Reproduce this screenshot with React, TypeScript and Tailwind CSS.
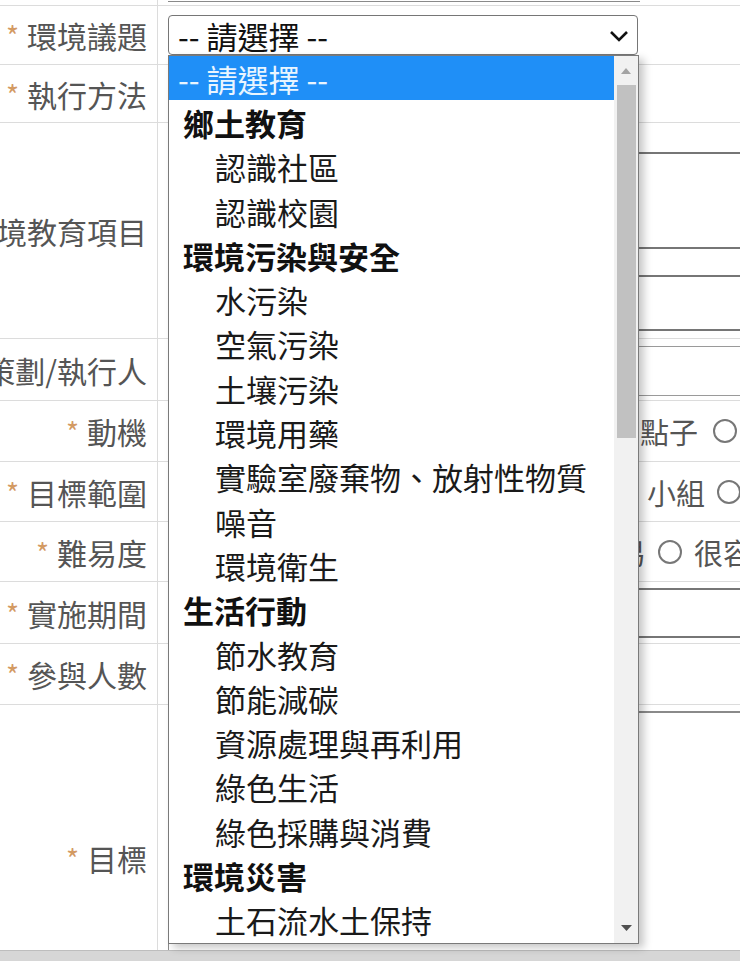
import React from "react";

const groups = [
  { label: "鄉土教育", items: ["認識社區", "認識校園"] },
  {
    label: "環境污染與安全",
    items: ["水污染", "空氣污染", "土壤污染", "環境用藥", "實驗室廢棄物、放射性物質", "噪音", "環境衛生"],
  },
  { label: "生活行動", items: ["節水教育", "節能減碳", "資源處理與再利用", "綠色生活", "綠色採購與消費"] },
  { label: "環境災害", items: ["土石流水土保持"] },
];

function Label({ text, star = true }: { text: string; star?: boolean }) {
  return (
    <div className="w-[158px] shrink-0 border-r border-[#dcdcdc] flex items-center justify-end pr-[10px] whitespace-nowrap text-[30px] leading-[30px] text-[#555]">
      {star && <span className="text-[#d39a63] text-[28px] mr-[8px]">*</span>}
      <span>{text}</span>
    </div>
  );
}

function Circle() {
  return <span className="inline-block w-[24px] h-[24px] rounded-full border-2 border-[#777] shrink-0" />;
}

function Dropdown() {
  return (
    <div className="absolute left-[-1px] top-[39px] w-[471px] h-[889px] bg-white border border-[#7a7a7a] shadow-[5px_4px_8px_rgba(0,0,0,0.22)] z-10 flex">
      <div className="flex-1 flex flex-col text-[31px] leading-[31px] text-[#1a1a1a]">
        <div className="h-[44.3px] bg-[#1f8ff7] text-[#e9f5ff] flex items-center pl-[9px] whitespace-nowrap">-- 請選擇 --</div>
        {groups.map((g) => (
          <React.Fragment key={g.label}>
            <div className="h-[44.3px] flex items-center pl-[14px] font-bold text-[#111] whitespace-nowrap">{g.label}</div>
            {g.items.map((it) => (
              <div key={it} className="h-[44.3px] flex items-center pl-[46px] whitespace-nowrap">
                {it}
              </div>
            ))}
          </React.Fragment>
        ))}
      </div>
      <div className="w-[24px] bg-[#f1f1f1] flex flex-col items-center">
        <div className="h-[29px] flex items-center justify-center">
          <svg width="10" height="6" viewBox="0 0 10 6">
            <polygon points="0,6 10,6 5,0" fill="#a3a3a3" />
          </svg>
        </div>
        <div className="w-[19px] h-[353px] bg-[#c1c1c1]" />
        <div className="flex-1" />
        <div className="h-[30px] flex items-center justify-center">
          <svg width="11" height="6" viewBox="0 0 11 6">
            <polygon points="0,0 11,0 5.5,6" fill="#505050" />
          </svg>
        </div>
      </div>
    </div>
  );
}

export default function App() {
  return (
    <div
      className="w-[740px] h-[961px] overflow-hidden bg-white flex flex-col"
      style={{ fontFamily: '"Noto Sans CJK TC", "Noto Sans", sans-serif' }}
    >
      {/* partial previous row */}
      <div className="h-[6px] flex border-b border-[#dcdcdc] shrink-0">
        <div className="w-[158px] shrink-0 border-r border-[#dcdcdc]" />
        <div className="flex-1 pl-[10px]">
          <div className="w-[472px] h-[2px] border-b border-[#8a8a8a]" />
        </div>
      </div>

      {/* 環境議題 */}
      <div className="h-[59px] flex border-b border-[#dcdcdc] shrink-0 relative z-10">
        <Label text="環境議題" />
        <div className="flex-1 flex items-center pl-[10px]">
          <div className="relative w-[470px] h-[40px] border border-[#767676] rounded-[4px] bg-white flex items-center pl-[9px] pr-[6px]">
            <span className="text-[31px] leading-[31px] text-[#111] flex-1 whitespace-nowrap">-- 請選擇 --</span>
            <svg width="24" height="24" viewBox="0 0 24 24" className="mt-[2px]">
              <polyline points="4,8 12,16 20,8" fill="none" stroke="#111" strokeWidth="2.6" />
            </svg>
            <Dropdown />
          </div>
        </div>
      </div>

      {/* 執行方法 */}
      <div className="h-[58px] flex border-b border-[#dcdcdc] shrink-0">
        <Label text="執行方法" />
        <div className="flex-1" />
      </div>

      {/* 環境教育項目 */}
      <div className="h-[216px] flex border-b border-[#dcdcdc] shrink-0">
        <Label text="環境教育項目" />
        <div className="flex-1 pl-[10px] pt-[29px] flex flex-col gap-[26px] overflow-hidden">
          <div className="w-[700px] h-[97px] border-2 border-[#767676] shrink-0" />
          <div className="w-[700px] h-[56px] border-2 border-[#767676] shrink-0" />
        </div>
      </div>

      {/* 策劃/執行人 */}
      <div className="h-[62px] flex border-b border-[#dcdcdc] shrink-0">
        <Label text="策劃/執行人" />
        <div className="flex-1 pl-[10px] pt-[7px] overflow-hidden">
          <div className="w-[700px] h-[50px] border border-[#9a9a9a]" />
        </div>
      </div>

      {/* 動機 */}
      <div className="h-[61px] flex border-b border-[#dcdcdc] shrink-0">
        <Label text="動機" />
        <div className="flex-1 flex items-center pl-[482px] gap-[15px] whitespace-nowrap text-[29px] leading-[30px] text-[#555] overflow-hidden">
          <span>點子</span>
          <Circle />
        </div>
      </div>

      {/* 目標範圍 */}
      <div className="h-[60px] flex border-b border-[#dcdcdc] shrink-0">
        <Label text="目標範圍" />
        <div className="flex-1 flex items-center pl-[489px] gap-[12px] whitespace-nowrap text-[29px] leading-[30px] text-[#555] overflow-hidden">
          <span>小組</span>
          <Circle />
        </div>
      </div>

      {/* 難易度 */}
      <div className="h-[60px] flex border-b border-[#dcdcdc] shrink-0">
        <Label text="難易度" />
        <div className="flex-1 flex items-center pl-[459px] gap-[12px] whitespace-nowrap text-[29px] leading-[30px] text-[#555] overflow-hidden">
          <span>易</span>
          <Circle />
          <span>很容易</span>
        </div>
      </div>

      {/* 實施期間 */}
      <div className="h-[62px] flex border-b border-[#dcdcdc] shrink-0">
        <Label text="實施期間" />
        <div className="flex-1 pl-[10px] pt-[6px] overflow-hidden">
          <div className="w-[700px] h-[50px] border-2 border-[#767676]" />
        </div>
      </div>

      {/* 參與人數 */}
      <div className="h-[61px] flex border-b border-[#dcdcdc] shrink-0">
        <Label text="參與人數" />
        <div className="flex-1" />
      </div>

      {/* 目標 */}
      <div className="flex-1 min-h-0 flex">
        <div className="w-[158px] shrink-0 border-r border-[#dcdcdc] flex items-start justify-end pr-[10px] pt-[138px] whitespace-nowrap text-[30px] leading-[30px] text-[#555]">
          <span className="text-[#d39a63] text-[28px] mr-[8px]">*</span>
          <span>目標</span>
        </div>
        <div className="flex-1 pl-[10px] pt-[6px] overflow-hidden">
          <div className="w-[700px] h-[400px] border-t-2 border-l border-[#8a8a8a]" />
        </div>
      </div>

      <div className="h-[11px] shrink-0 bg-[#d6d6d6] border-t border-[#bdbdbd]" />
    </div>
  );
}
